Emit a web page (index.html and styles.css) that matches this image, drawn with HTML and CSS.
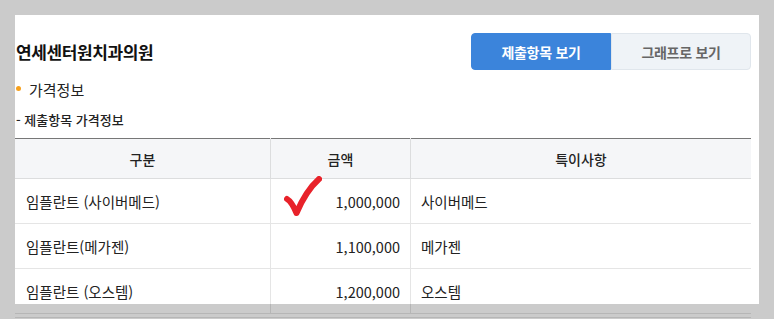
FILE: index.html
```html
<!DOCTYPE html>
<html lang="ko">
<head>
    <meta charset="UTF-8">
    <meta name="viewport" content="width=device-width, initial-scale=1.0">
    <title>가격정보</title>
    <link rel="stylesheet" href="styles.css">
</head>
<body>

    <div class="panel">
        <div class="toolbar">
            <h1 class="clinic">연세센터원치과의원</h1>
            <div class="tabs">
                <button type="button" class="tab tab-on">제출항목 보기</button>
                <button type="button" class="tab">그래프로 보기</button>
            </div>
        </div>

        <h2 class="section"><span class="dot"></span>가격정보</h2>
        <h3 class="sub">- 제출항목 가격정보</h3>

        <table class="price">
            <thead>
                <tr>
                    <th class="col-name">구분</th>
                    <th class="col-price">금액</th>
                    <th>특이사항</th>
                </tr>
            </thead>
            <tbody>
                <tr>
                    <td>임플란트 (사이버메드)</td>
                    <td class="num">
                        <svg class="check" width="38" height="42" viewBox="0 0 38 42">
                            <path d="M3 23 C6.5 25 9.5 30 12.5 37 C18 24 25 12 35 3" fill="none" stroke="#e8222a" stroke-width="6" stroke-linecap="round" stroke-linejoin="round"/>
                        </svg>
                        1,000,000
                    </td>
                    <td>사이버메드</td>
                </tr>
                <tr>
                    <td>임플란트(메가젠)</td>
                    <td class="num">1,100,000</td>
                    <td>메가젠</td>
                </tr>
                <tr>
                    <td>임플란트 (오스템)</td>
                    <td class="num">1,200,000</td>
                    <td>오스템</td>
                </tr>
            </tbody>
        </table>
        <div class="table-end"></div>
    </div>

</body>
</html>
```

FILE: styles.css
```css
body {
    font-family: "Noto Sans CJK KR", "Noto Sans", sans-serif;
    background-color: #cbcbcb;
    color: #222;
    margin: 0px;
    padding: 15px 0 0 15px;
    height: 304px;
    overflow: hidden;
}
div.panel{
    width: 736px;
    height: 289px;
    padding: 0 8px 0 0;
    background-color: white;
}
div.toolbar{
    display: flex;
    justify-content: space-between;
    align-items: center;
    height: 37px;
    padding-top: 18px;
}
h1.clinic{
    margin: 0;
    padding-left: 1px;
    font-size: 17px;
    font-weight: bold;
    letter-spacing: -0.4px;
    color: #111;
}
div.tabs{
    display: flex;
}
.tab {
    width: 140px;
    height: 37px;
    padding: 0;
    font-family: inherit;
    font-size: 14px;
    font-weight: bold;
    letter-spacing: -0.3px;
    color: #666;
    background-color: #eff3f7;
    border: 1px solid #e0e6ec;
    border-radius: 0 4px 4px 0;
    cursor: pointer;
}
.tab-on {
    color: white;
    background-color: #3b84db;
    border-color: #3b84db;
    border-radius: 4px 0 0 4px;
}
h2.section{
    display: flex;
    align-items: center;
    margin: 9px 0 0 0;
    height: 20px;
    font-size: 15px;
    font-weight: normal;
    color: #222;
}
span.dot{
    width: 5px;
    height: 5px;
    margin: 0 8px 2px 1px;
    border-radius: 50%;
    background-color: #f7a01c;
}
h3.sub{
    margin: 12px 0 0 1px;
    height: 18px;
    line-height: 18px;
    font-size: 13px;
    font-weight: 500;
    color: #222;
}
table.price {
    width: 736px;
    border-collapse: collapse;
    margin-top: 9px;
    font-size: 14.5px;
}
table.price thead tr{
    border-top: 1px solid #777;
}
th {
    height: 39px;
    padding: 0;
    font-size: 14px;
    font-weight: 500;
    color: #222;
    background-color: #f5f6f8;
    border-bottom: 1px solid rgba(0, 0, 0, 0.1);
    border-left: 1px solid rgba(0, 0, 0, 0.1);
}
th:first-child, td:first-child {
    border-left: none;
}
th.col-name {
    width: 255px;
}
th.col-price {
    width: 139px;
}
td {
    height: 44px;
    padding: 0 10px;
    color: #222;
    border-bottom: 1px solid rgba(0, 0, 0, 0.1);
    border-left: 1px solid rgba(0, 0, 0, 0.1);
}
td:first-child {
    padding-left: 11px;
}
td.num {
    position: relative;
    text-align: right;
}
svg.check {
    position: absolute;
    left: 13px;
    top: -3px;
}
div.table-end{
    width: 736px;
    margin-top: 3px;
    border-top: 1px solid rgba(0, 0, 0, 0.1);
}
```
